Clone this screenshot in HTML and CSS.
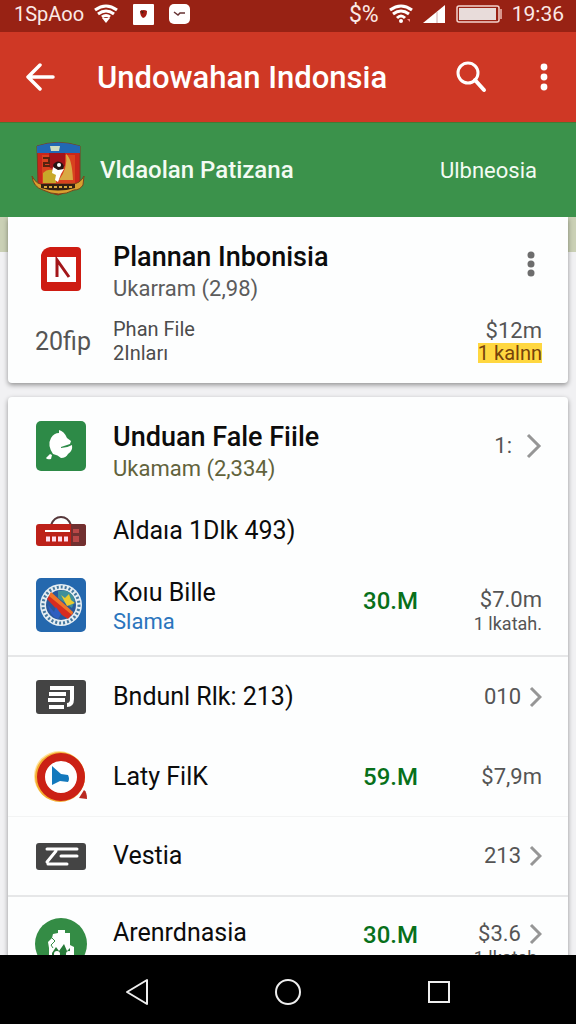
FILE: index.html
```html
<!DOCTYPE html>
<html lang="id">
<head>
<meta charset="UTF-8">
<meta name="viewport" content="width=device-width, initial-scale=1.0">
<title>Undowahan Indonsia</title>
<link rel="stylesheet" href="styles.css">
</head>
<body>
<div class="status">
<span>1SpAoo</span>
<svg width="24" height="20" viewBox="0 0 24 20" fill="none" stroke="#fff" stroke-width="3"><path d="M1 6Q12-2 23 6M4 10Q12 4 20 10M8 13Q12 10 16 13"/><path d="M8 14h8l-4 5z" fill="#fff" stroke="none"/></svg>
<svg class="app-one" width="21" height="21" viewBox="0 0 21 21"><rect width="21" height="21" rx="1" fill="#fff"/><path d="M7 7q4-2 7 0q0 6-4 7q-3-2-3-7z" fill="#a51a12"/><path d="M8 6l3 2-2 2z" fill="#421"/></svg>
<svg class="app-two" width="21" height="20" viewBox="0 0 21 20"><rect width="21" height="20" rx="5" fill="#fff"/><path d="M5 8l4 3 2-2 5 0" stroke="#633" stroke-width="1.5" fill="none"/></svg>
<div class="status-right">
<span class="signs">$%</span>
<svg width="24" height="20" viewBox="0 0 24 20" fill="none" stroke="#fff" stroke-width="3"><path d="M1 6Q12-2 23 6M4 10Q12 4 20 10M8 14Q12 10 16 14"/><circle cx="12" cy="17" r="2" fill="#fff" stroke="none"/><path d="M18 15h3v3z" fill="#f88" stroke="none"/></svg>
<svg width="23" height="20" viewBox="0 0 23 20"><path d="M0 19L22 1v18z" fill="#fff"/><path d="M14 8v11" stroke="#caa"/></svg>
<svg width="46" height="18" viewBox="0 0 46 18"><rect x="1" y="1" width="42" height="16" rx="2" fill="none" stroke="#f3d3cd" stroke-width="1.5"/><rect x="3" y="3" width="37" height="12" fill="#e8dcda"/><path d="M45 4v10" stroke="#d8958b" stroke-width="2"/></svg>
<span class="clock">19:36</span>
</div>
</div>
<header class="appbar">
<button class="icon-btn" aria-label="Back"><svg width="30" height="30" viewBox="0 0 30 30" fill="none" stroke="#fff" stroke-width="3.5" stroke-linecap="round" stroke-linejoin="round"><path d="M27 15H3M14 3L2 15l12 12"/></svg></button>
<h1>Undowahan Indonsia</h1>
<button class="icon-btn" aria-label="Search"><svg width="32" height="32" viewBox="0 0 32 32" fill="none" stroke="#fff" stroke-width="3" stroke-linecap="round"><circle cx="13" cy="12" r="10"/><path d="M20 19l9 10" stroke-width="4"/></svg></button>
<button class="icon-btn" aria-label="More"><svg width="8" height="28" viewBox="0 0 8 28" fill="#fff"><circle cx="4" cy="4" r="3.4"/><circle cx="4" cy="14" r="3.4"/><circle cx="4" cy="24" r="3.4"/></svg></button>
</header>
<div class="banner">
<svg width="54" height="56" viewBox="0 0 54 56"><path d="M6 4Q27-3 49 4v38q-5 6-22 11Q10 49 7 42z" fill="#c9261b" stroke="#7c3a22"/><path d="M6 4Q27-3 49 4v7H6z" fill="#2268b5"/><path d="M19 4h10l-1 5h-8z" fill="#cfdcc0"/><path d="M11 13h33v29H11z" fill="#d8421f"/><path d="M35 12q6 4 7 26H28q9-12 7-26z" fill="#d9a944"/><path d="M12 31q6-6 13-1v11H12z" fill="#c8a92a"/><path d="M18 11h16v13l-9 5-7-4z" fill="#a31319"/><path d="M12 16h6v5h-5v3h6" fill="none" stroke="#57230f" stroke-width="2"/><path d="M22 23q4-6 9-2 4 4-1 8l-5 2z" fill="#241414"/><path d="M22 25l5 3 6-1-3 5-3 8-3-2 1-5-4-2z" fill="#fff"/><circle cx="28" cy="23" r="2" fill="#fff"/><path d="M1 34q5 10 13 8h27q8 0 12-8l-1 9q-3 5-9 5-15 8-31 0-10-3-11-14z" fill="#d9a02f" stroke="#77461b"/><path d="M10 42h34v4q-17 5-34 0z" fill="#322114"/><path d="M13 45h29" stroke="#dba73a" stroke-width="2" stroke-dasharray="3 2"/></svg>
<span class="banner-name">Vldaolan Patizana</span>
<span class="banner-side">Ulbneosia</span>
</div>
<main>
<section class="card summary">
<div class="row">
<div class="icon"><svg width="40" height="44" viewBox="0 0 40 44"><path d="M9 0h27q4 0 4 4v36q0 4-4 4H4q-4 0-4-4V8Q2 1 9 0z" fill="#ce1c12"/><path d="M6 10h29v25H6z" fill="#fff"/><path d="M16 30V13l12 17" fill="none" stroke="#a3161a" stroke-width="3"/></svg></div>
<div class="text">
<h2>Plannan Inbonisia</h2>
<p>Ukarram (2,98)</p>
</div>
<button class="icon-btn more" aria-label="Options"><svg width="8" height="26" viewBox="0 0 8 26" fill="#6d6d6d"><circle cx="4" cy="4" r="3.5"/><circle cx="4" cy="13" r="3.5"/><circle cx="4" cy="22" r="3.5"/></svg></button>
</div>
<div class="row details">
<div class="size">20fip</div>
<div class="text">
<p>Phan File</p>
<p>2Inları</p>
</div>
<div class="values">
<span>$12m</span>
<mark>1 kalnn</mark>
</div>
</div>
</section>
<ul class="card list">
<li class="row first">
<div class="icon"><svg width="50" height="50" viewBox="0 0 50 50"><rect width="50" height="50" rx="5" fill="#2d8a47"/><path d="M23 9q5 1 8 8l4 3-1 3-9 3v1q6 0 11-3 1 6-4 9-2 4-7 4-3-3-8-4-6-9-2-16 3-5 8-5z" fill="#fff"/><path d="M10 37l4-4 2 1-1 4q-4 1-5-1z" fill="#fff"/></svg></div>
<div class="text">
<h2>Unduan Fale Fiile</h2>
<p class="olive">Ukamam (2,334)</p>
</div>
<div class="values with-arrow big"><span>1:</span><svg width="16" height="26" viewBox="0 0 16 26"><path d="M2 2l11 11L2 24"/></svg></div>
</li>
<li class="row short">
<div class="icon"><svg width="50" height="30" viewBox="0 0 50 30"><path d="M15 9q3-8 10-8t10 8" fill="none" stroke="#55373a" stroke-width="2"/><rect y="8" width="50" height="22" rx="3" fill="#bd2119"/><path d="M35 8h12q3 0 3 3v16q0 3-3 3H35z" fill="#713030"/><path d="M9 15h25" stroke="#fff" stroke-width="2"/><path d="M10 23h23" stroke="#fde" stroke-width="5" stroke-dasharray="4 2"/><path d="M37 13h6v4h-6zM37 20h6v6h-6z" fill="#b94747"/></svg></div>
<div class="text"><h3>Aldaıa 1Dlk 493)</h3></div>
</li>
<li class="row tall line">
<div class="icon"><svg width="50" height="54" viewBox="0 0 50 54"><rect width="50" height="54" rx="5" fill="#2468ae"/><circle cx="25" cy="27" r="21" fill="#e5edf2"/><circle cx="25" cy="27" r="18" fill="none" stroke="#43779f" stroke-width="3" stroke-dasharray="2 2"/><circle cx="25" cy="27" r="15" fill="#28589b"/><path d="M22 13q13-3 17 9l-3 8-14-10z" fill="#3f8f9a"/><path d="M25 17l4 3 4-4 2 6 4 3-8 3z" fill="#e9cb30"/><path d="M11 21l4-6 22 20-5 6-6-4z" fill="#d72c20"/><path d="M13 18l2-4 22 20-1 3z" fill="#ef7427"/><path d="M12 27l6 7 2-5 5 7-3 5q-8-3-10-14z" fill="#2f5ec0"/></svg></div>
<div class="text">
<h3>Koıu Bille</h3>
<p class="blue">Slama</p>
</div>
<span class="amount">30.M</span>
<div class="values"><span>$7.0m</span><small>1 lkatah.</small></div>
</li>
<li class="row mid">
<div class="icon"><svg width="50" height="34" viewBox="0 0 50 34"><rect width="50" height="34" rx="3" fill="#444"/><path d="M14 8h22v11q0 6-5 6M13 14h17M12 20h17M13 27h15" fill="none" stroke="#fff" stroke-width="4"/><path d="M14 11h20" stroke="#444"/></svg></div>
<div class="text"><h3>Bndunl Rlk: 213)</h3></div>
<div class="values with-arrow"><span>010</span><svg width="13" height="22" viewBox="0 0 13 22"><path d="M2 2l9 9-9 9"/></svg></div>
</li>
<li class="row mid faint">
<div class="icon"><svg width="54" height="54" viewBox="0 0 54 54"><circle cx="25" cy="26" r="25" fill="#ffe39a"/><circle cx="26" cy="27" r="25" fill="#f4ae32"/><circle cx="27" cy="27" r="20" fill="#fff" stroke="#cb2115" stroke-width="8"/><path d="M18 16l9 8 7 1q2 4 0 7l-8-1-8 4z" fill="#1479bd"/><path d="M45 48l5-8q3 2 3 9z" fill="#b92920"/></svg></div>
<div class="text"><h3>Laty FilK</h3></div>
<span class="amount">59.M</span>
<div class="values"><span>$7,9m</span></div>
</li>
<li class="row mid line">
<div class="icon"><svg width="50" height="27" viewBox="0 0 50 27"><rect width="50" height="27" rx="3" fill="#444"/><path d="M11 6h30M25 13h16M12 21h19M20 8l-9 11" fill="none" stroke="#fff" stroke-width="3" stroke-linecap="round"/></svg></div>
<div class="text"><h3>Vestia</h3></div>
<div class="values with-arrow"><span>213</span><svg width="13" height="22" viewBox="0 0 13 22"><path d="M2 2l9 9-9 9"/></svg></div>
</li>
<li class="row last">
<div class="icon"><svg width="52" height="52" viewBox="0 0 52 52"><circle cx="26" cy="26" r="26" fill="#348c45"/><path d="M18 16l5-1v-3h7v3h5v12l4 2v10H14V30l-1-6 4-4z" fill="#fff"/><path d="M17 20l3 3-4 4 2 3" fill="none" stroke="#348c45"/><path d="M17 35l4-6 3 4 5-7 3 7 3-3v9H17z" fill="#287a39"/><circle cx="22" cy="36" r="3" fill="#fff"/><circle cx="34" cy="36" r="3" fill="#fff"/></svg></div>
<div class="text"><h3>Arenrdnasia</h3></div>
<span class="amount">30.M</span>
<div class="values">
<div class="with-arrow"><span>$3.6</span><svg width="13" height="22" viewBox="0 0 13 22"><path d="M2 2l9 9-9 9"/></svg></div>
<small>1 lkatah.</small>
</div>
</li>
</ul>
</main>
<nav class="navbar">
<button class="icon-btn" aria-label="Back"><svg width="24" height="28" viewBox="0 0 24 28" fill="none" stroke="#eee" stroke-width="2" stroke-linejoin="round"><path d="M22 2v24L2 14z"/></svg></button>
<button class="icon-btn" aria-label="Home"><svg width="28" height="28" viewBox="0 0 28 28" fill="none" stroke="#eee" stroke-width="2"><circle cx="14" cy="14" r="12"/></svg></button>
<button class="icon-btn" aria-label="Recent"><svg width="24" height="24" viewBox="0 0 24 24" fill="none" stroke="#eee" stroke-width="2"><rect x="2" y="2" width="20" height="20"/></svg></button>
</nav>
</body>
</html>
```
FILE: styles.css
```css
* {
box-sizing: border-box;
}
body {
font-family: Roboto, sans-serif;
margin: 0;
height: 100vh;
display: flex;
flex-direction: column;
background: #f1f1f3;
color: #0c0c0c;
}
h1, h2, h3, p, ul {
margin: 0;
padding: 0;
font-weight: 400;
}
svg {
display: block;
flex: none;
}
.status {
height: 32px;
flex: none;
display: flex;
align-items: center;
padding: 0 12px 4px 14px;
background: #982214;
color: #fbe9e6;
font-size: 20px;
}
.status > svg {
margin-left: 10px;
}
.status > .app-one,
.status > .app-two {
margin-left: 15px;
}
.status-right {
margin-left: auto;
display: flex;
align-items: center;
gap: 10px;
}
.clock {
font-size: 21px;
}
.signs {
font-size: 23px;
}
.icon-btn {
border: 0;
padding: 0;
background: none;
cursor: pointer;
}
.appbar {
height: 90px;
flex: none;
display: flex;
align-items: center;
padding: 0 28px 0 26px;
background: #cf3825;
color: #fff;
}
.appbar h1 {
flex: 1;
margin-left: 41px;
font-size: 31px;
font-weight: 500;
}
.appbar .icon-btn + .icon-btn {
margin-left: 53px;
}
.banner {
height: 95px;
flex: none;
display: flex;
align-items: center;
padding: 0 39px 0 31px;
background: #3b924b;
border-top: 1px solid #437a35;
color: #f3fbf3;
}
.banner-name {
flex: 1;
margin-left: 15px;
font-size: 24px;
font-weight: 500;
}
.banner-side {
font-size: 22px;
}
main {
flex: 1;
min-height: 0;
overflow: hidden;
padding: 0 8px;
background: linear-gradient(#cad0b5 35px, #f1f1f3 35px);
}
.card {
background: #fdfefe;
border-radius: 4px;
box-shadow: 0 2px 5px #0006;
}
.row {
display: flex;
align-items: center;
padding: 0 26px 0 27px;
}
.icon {
width: 52px;
flex: none;
display: flex;
justify-content: center;
}
.text {
flex: 1;
margin-left: 26px;
}
h2 {
font-size: 27px;
line-height: 32px;
font-weight: 500;
}
h3 {
font-size: 25px;
line-height: 30px;
}
.text p {
font-size: 22px;
line-height: 32px;
color: #5c5c5c;
}
.text p.olive {
color: #62633c;
}
.text p.blue {
line-height: 28px;
color: #2a75bd;
}
.summary {
border-radius: 0 0 4px 4px;
padding: 24px 0 18px;
margin-bottom: 14px;
}
.summary .row:first-child {
align-items: flex-start;
}
.summary .icon {
padding-top: 6px;
}
.more {
margin: 10px 7px 0 0;
}
.details {
margin-top: 12px;
}
.details .text p {
font-size: 20px;
line-height: 24px;
color: #4c4c4c;
}
.size {
width: 52px;
font-size: 25px;
color: #555;
}
.values {
display: flex;
flex-direction: column;
align-items: flex-end;
font-size: 22px;
line-height: 24px;
color: #555;
}
.values small {
font-size: 18px;
white-space: nowrap;
}
mark {
background: #ffd740;
color: #76420b;
font-size: 20px;
line-height: 20px;
}
.with-arrow {
display: flex;
flex-direction: row;
align-items: center;
gap: 8px;
}
.with-arrow svg {
fill: none;
stroke: #969696;
stroke-width: 3;
}
.big {
height: 50px;
gap: 14px;
}
.amount {
width: 113px;
font-size: 24px;
line-height: 26px;
font-weight: 500;
color: #08701a;
}
.amount + .values {
width: 66px;
}
.list {
list-style: none;
}
.first {
height: 102px;
align-items: flex-start;
padding-top: 24px;
}
.short {
height: 64px;
}
.tall {
height: 94px;
align-items: flex-start;
padding-top: 15px;
}
.tall .amount,
.tall .values {
padding-top: 10px;
}
.mid {
height: 80px;
}
.line {
border-bottom: 2px solid #e6e7e8;
}
.faint {
border-bottom: 1px solid #f3f4f4;
}
.last {
align-items: flex-start;
padding-top: 21px;
}
.last .values,
.last .amount {
padding-top: 4px;
}
.navbar {
height: 69px;
flex: none;
display: flex;
align-items: center;
justify-content: center;
gap: 125px;
padding-top: 4px;
background: #000;
}
```
